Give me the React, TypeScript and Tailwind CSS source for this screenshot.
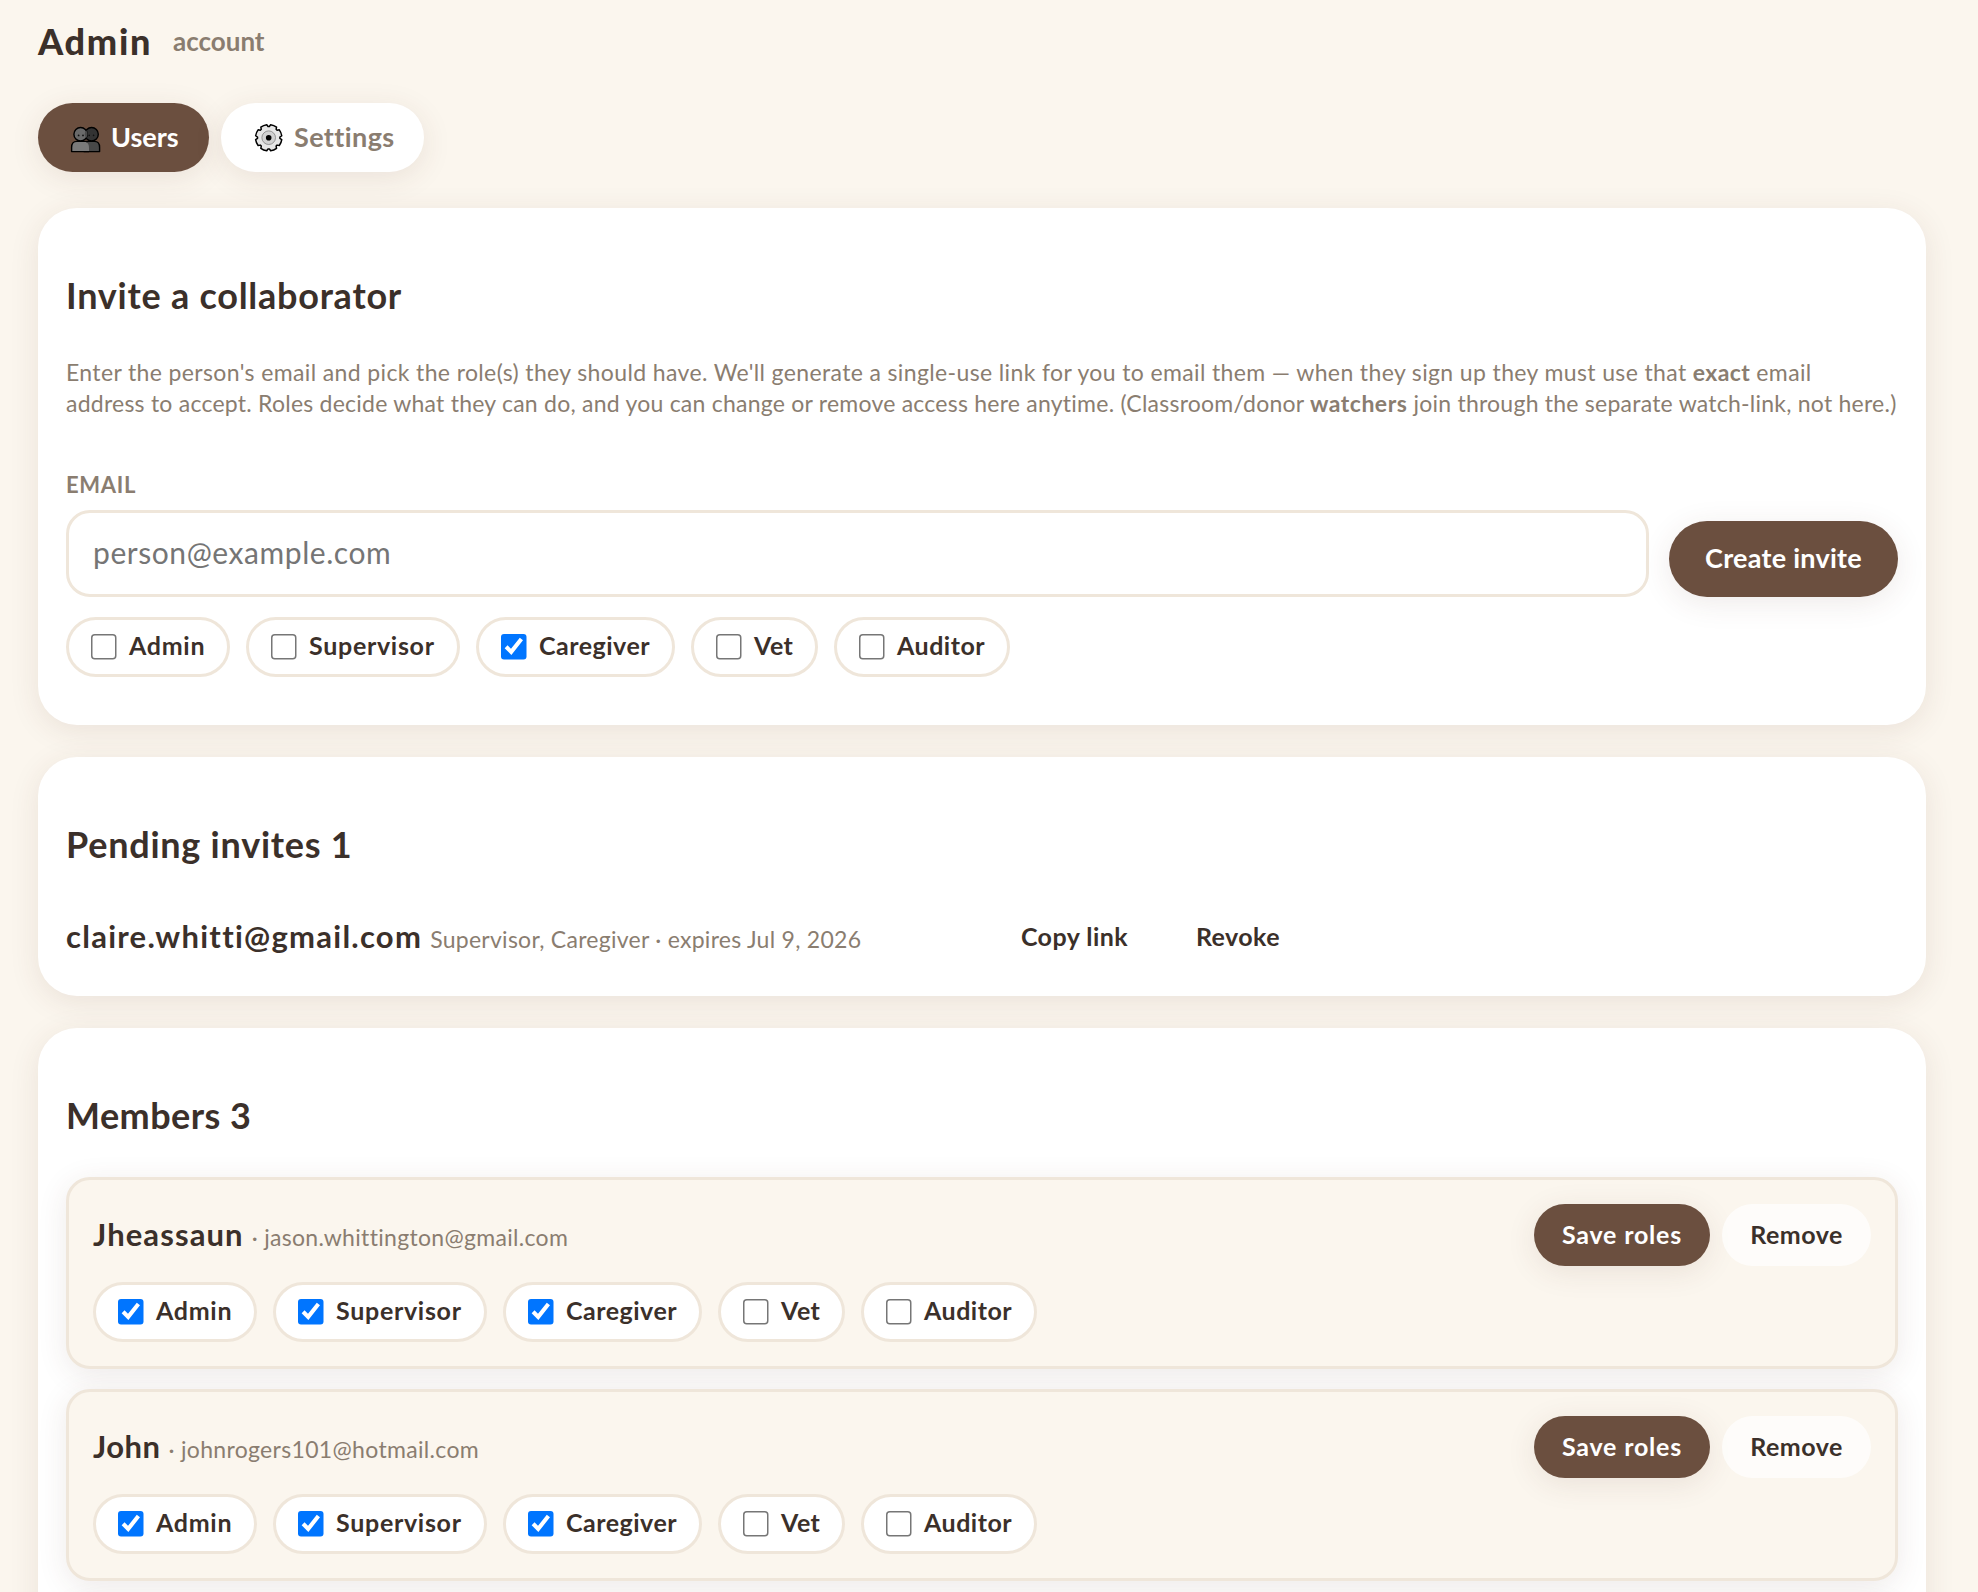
import type { ReactNode } from "react";

const SHADOW = "shadow-[0_6px_30px_rgba(84,48,36,0.1)]";

function UsersIcon() {
  return (
    <svg width="37" height="35" viewBox="2 0 37 35" stroke="#000" strokeWidth="1.4" strokeLinejoin="round">
      <circle cx="25.6" cy="14.2" r="6.7" fill="#333" />
      <path d="M18 31.6v-4.2c0-4 2-6 5-6h5.4c3.4 0 5.2 2.2 5.2 6v4.2z" fill="#484848" />
      <circle cx="14.6" cy="14.2" r="6.7" fill="#6a6a6a" />
      <path d="M20.1 10.3a6.7 6.7 0 0 1 0 7.8 6.7 6.7 0 0 1 0-7.8z" fill="#4c4c4c" stroke="none" />
      <path d="M5.6 31.6v-4.2c0-4 2-6 5.2-6h6.8c3.2 0 5.4 2.2 5.4 6v4.2z" fill="#7a7a7a" stroke="none" />
      <path d="M23 31.6H5.6v-4.2c0-4 2-6 5.2-6h11" fill="none" />
      <g fill="#111" stroke="none">
        <circle cx="12.6" cy="15.4" r="0.9" />
        <circle cx="17" cy="15.4" r="0.9" />
        <circle cx="23.2" cy="15.4" r="0.8" />
        <circle cx="27.6" cy="15.4" r="0.8" />
      </g>
    </svg>
  );
}

function gearPath(cx: number, cy: number) {
  const point = (deg: number, r: number) => {
    const a = (deg * Math.PI) / 180;
    return `${(cx + r * Math.cos(a)).toFixed(2)} ${(cy + r * Math.sin(a)).toFixed(2)}`;
  };
  let d = "";
  for (let k = 0; k < 8; k++) {
    const c = 22.5 + 45 * k;
    d += `${k === 0 ? "M" : "L"}${point(c - 19, 11.2)}L${point(c - 14, 13.2)}A13.2 13.2 0 0 1 ${point(c + 14, 13.2)}L${point(c + 19, 11.2)}`;
  }
  return d + "Z";
}

function GearIcon() {
  return (
    <svg width="37" height="35" viewBox="3 4 37 35">
      <path d={gearPath(20.7, 21.7)} fill="#e6e6e6" stroke="#000" strokeWidth="1.5" strokeLinejoin="round" />
      <circle cx="20.7" cy="21.7" r="6.8" fill="#d2d2d2" stroke="#8a8a8a" strokeWidth="0.9" />
      <circle cx="20.7" cy="21.7" r="2.8" fill="#000" />
    </svg>
  );
}

function Card({ children, className = "" }: { children: ReactNode; className?: string }) {
  return <section className={`rounded-[39px] bg-white px-7 pt-16 ${SHADOW} ${className}`}>{children}</section>;
}

function Heading({ children, className }: { children: ReactNode; className: string }) {
  return <h2 className={`text-[36px] leading-[46px] font-bold ${className}`}>{children}</h2>;
}

const ROLES = [
  { name: "Admin", chip: "w-[164px]", track: "tracking-[0.7px]" },
  { name: "Supervisor", chip: "w-[214px]", track: "tracking-[0.7px]" },
  { name: "Caregiver", chip: "w-[199px]", track: "tracking-[0.5px]" },
  { name: "Vet", chip: "w-[127px]", track: "tracking-[0.5px]" },
  { name: "Auditor", chip: "w-[176px]", track: "tracking-[0.5px]" },
];

function RoleChips({ checked }: { checked: string[] }) {
  return (
    <div className="flex gap-4">
      {ROLES.map((r) => (
        <label
          key={r.name}
          className={`flex h-[60px] items-center gap-3 rounded-full border-[3px] border-[#efe6da] bg-white pl-[22px] text-[25px] font-bold ${r.chip} ${r.track}`}
        >
          <input type="checkbox" defaultChecked={checked.includes(r.name)} className="size-[17.3334px] shrink-0 [zoom:1.5]" />
          <span className="pb-[2px] whitespace-nowrap">{r.name}</span>
        </label>
      ))}
    </div>
  );
}

function GhostButton({ children, className }: { children: ReactNode; className: string }) {
  return (
    <button className={`flex h-[62px] items-center justify-center rounded-full bg-white/70 text-[25px] font-bold whitespace-nowrap ${className}`}>
      {children}
    </button>
  );
}

function Member({ name, email, nameTrack, emailTrack }: { name: string; email: string; nameTrack: string; emailTrack: string }) {
  return (
    <div className={`flex h-[192px] shrink-0 flex-col gap-4 rounded-3xl border-[3px] border-[#efe6da] bg-[#fbf6ee] p-6 ${SHADOW}`}>
      <div className="flex h-[62px] items-center justify-between">
        <div className="flex items-baseline gap-2 pb-px">
          <span className={`text-[31px] font-bold ${nameTrack}`}>{name}</span>
          <span className={`text-[23px] text-[#8a7d70] ${emailTrack}`}>· {email}</span>
        </div>
        <div className="flex gap-3">
          <button className={`flex h-[62px] w-[176px] items-center justify-center rounded-full bg-[#6b4f3f] text-[25px] font-bold tracking-[0.8px] text-white ${SHADOW}`}>
            Save roles
          </button>
          <GhostButton className="w-[149px] tracking-[0.5px]">Remove</GhostButton>
        </div>
      </div>
      <RoleChips checked={["Admin", "Supervisor", "Caregiver"]} />
    </div>
  );
}

export default function App() {
  return (
    <div className="flex h-screen flex-col overflow-hidden bg-[#fbf6ee] pt-4 pr-[52px] pl-[38px] font-['Lato',sans-serif] text-[#3b302a]">
      <header className="flex h-12 shrink-0 items-center gap-5 pt-0.5">
        <h1 className="w-[115px] text-[36px] leading-[48px] font-black tracking-[1.7px]">Admin</h1>
        <span className="text-[26px] leading-[48px] font-bold text-[#8a7d70]">account</span>
      </header>

      <nav className="mt-[39px] flex h-[69px] shrink-0 gap-3 text-[27px] font-bold">
        <button className={`flex w-[171px] items-center gap-1.5 rounded-full bg-[#6b4f3f] pl-[30px] text-white ${SHADOW}`}>
          <UsersIcon />
          <span>Users</span>
        </button>
        <button className={`flex w-[203px] items-center gap-1.5 rounded-full bg-white pl-[30px] tracking-[0.4px] text-[#8a7d70] ${SHADOW}`}>
          <GearIcon />
          <span>Settings</span>
        </button>
      </nav>

      <Card className="mt-9 h-[517px] shrink-0">
        <Heading className="tracking-[0.75px]">Invite a collaborator</Heading>
        <p className="mt-[39px] text-[23px] leading-[31px] whitespace-nowrap text-[#8a7d70]">
          <span className="tracking-[0.37px]">
            Enter the person's email and pick the role(s) they should have. We'll generate a single-use link for you to email them — when they sign up they must use that <b>exact</b> email
          </span>
          <br />
          <span className="tracking-[0.235px]">
            address to accept. Roles decide what they can do, and you can change or remove access here anytime. (Classroom/donor{" "}
            <b className="tracking-[0.5px]">watchers</b> join through the separate watch-link, not here.)
          </span>
        </p>
        <div className="mt-[51px] flex items-end gap-5">
          <label className="flex grow flex-col gap-2.5">
            <span className="text-[22px] leading-[30px] font-bold tracking-[0.7px] text-[#8a7d70]">EMAIL</span>
            <input
              type="email"
              placeholder="person@example.com"
              className="h-[87px] w-full rounded-3xl border-[3px] border-[#efe6da] bg-white pr-6 pb-1 pl-6 text-[30px] tracking-[0.57px] placeholder:text-[#757575]"
            />
          </label>
          <button className={`flex h-[76px] w-[229px] items-center justify-center rounded-full bg-[#6b4f3f] pb-px text-[27px] font-bold tracking-[0.25px] text-white ${SHADOW}`}>
            Create invite
          </button>
        </div>
        <div className="mt-5">
          <RoleChips checked={["Caregiver"]} />
        </div>
      </Card>

      <Card className="mt-8 h-[239px] shrink-0">
        <Heading className="tracking-[0.75px]">Pending invites 1</Heading>
        <div className="mt-[37px] flex h-[62px] items-center">
          <div className="flex w-[927px] items-baseline gap-2 pt-0.5">
            <span className="text-[31px] font-bold tracking-[1.25px]">claire.whitti@gmail.com</span>
            <span className="text-[23px] tracking-[0.27px] text-[#8a7d70]">Supervisor, Caregiver · expires Jul 9, 2026</span>
          </div>
          <div className="flex gap-3 pt-1">
            <GhostButton className="w-[163px] tracking-[0.45px]">Copy link</GhostButton>
            <GhostButton className="w-[140px] tracking-[0.45px]">Revoke</GhostButton>
          </div>
        </div>
      </Card>

      <Card className="mt-8 h-[800px] shrink-0">
        <Heading className="tracking-[0.45px]">Members 3</Heading>
        <div className="mt-[39px] flex flex-col gap-5">
          <Member name="Jheassaun" email="jason.whittington@gmail.com" nameTrack="tracking-[1.1px]" emailTrack="tracking-[0.31px]" />
          <Member name="John" email="johnrogers101@hotmail.com" nameTrack="tracking-[0.45px]" emailTrack="tracking-[0.33px]" />
          <div className={`h-[192px] rounded-3xl border-[3px] border-[#efe6da] bg-[#fbf6ee] ${SHADOW}`} />
        </div>
      </Card>
    </div>
  );
}
